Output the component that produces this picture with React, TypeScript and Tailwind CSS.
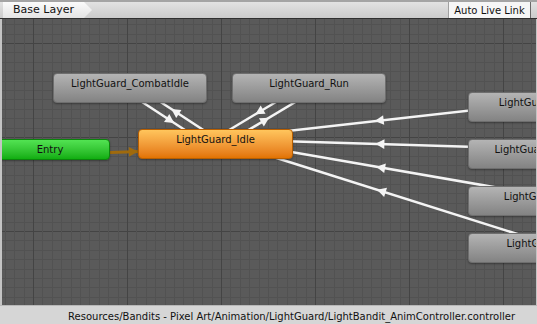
import React from "react";

type NodeKind = "gray" | "orange" | "green";

type StateNode = {
  id: string;
  label: string;
  x: number;
  y: number;
  w: number;
  h: number;
  kind: NodeKind;
};

// page coordinates (the canvas starts at 2,19)
const nodes: StateNode[] = [
  { id: "entry", label: "Entry", x: -10, y: 139, w: 120, h: 21, kind: "green" },
  { id: "idle", label: "LightGuard_Idle", x: 138, y: 129, w: 155, h: 30, kind: "orange" },
  { id: "combat", label: "LightGuard_CombatIdle", x: 53, y: 73, w: 154, h: 30, kind: "gray" },
  { id: "run", label: "LightGuard_Run", x: 232, y: 73, w: 154, h: 30, kind: "gray" },
  { id: "attack", label: "LightGuard_Attack", x: 468, y: 92, w: 154, h: 30, kind: "gray" },
  { id: "recover", label: "LightGuard_Recover", x: 468, y: 139, w: 154, h: 30, kind: "gray" },
  { id: "hurt", label: "LightGuard_Hurt", x: 468, y: 186, w: 154, h: 30, kind: "gray" },
  { id: "die", label: "LightGuard_Die", x: 468, y: 233, w: 154, h: 30, kind: "gray" },
];

const transitions: [string, string][] = [
  ["combat", "idle"],
  ["idle", "combat"],
  ["run", "idle"],
  ["idle", "run"],
  ["attack", "idle"],
  ["recover", "idle"],
  ["hurt", "idle"],
  ["die", "idle"],
];

const kindClass: Record<NodeKind, string> = {
  gray: "bg-linear-to-b from-[#b4b4b4] to-[#838383] border border-[#6e6e6e] pt-[4px]",
  orange: "bg-linear-to-b from-[#ffc55c] to-[#e27300] border border-[#b85e00] pt-[4px]",
  green: "bg-linear-to-b from-[#52e352] to-[#0fae0f] border border-[#0b850b] flex items-center justify-center",
};

const byId = (id: string) => nodes.find((n) => n.id === id)!;
const center = (n: StateNode) => ({ x: n.x + n.w / 2, y: n.y + n.h / 2 });

function Edge({ from, to, color, width }: { from: StateNode; to: StateNode; color: string; width: number }) {
  const a = center(from);
  const b = center(to);
  const len = Math.hypot(b.x - a.x, b.y - a.y);
  const dx = (b.x - a.x) / len;
  const dy = (b.y - a.y) / len;
  const ox = -dy * 5;
  const oy = dx * 5;
  const x1 = a.x + ox;
  const y1 = a.y + oy;
  const x2 = b.x + ox;
  const y2 = b.y + oy;
  const mx = (x1 + x2) / 2;
  const my = (y1 + y2) / 2;
  const tip = [mx + dx * 5, my + dy * 5];
  const bx = mx - dx * 4;
  const by = my - dy * 4;
  const p1 = [bx - dy * 4.8, by + dx * 4.8];
  const p2 = [bx + dy * 4.8, by - dx * 4.8];
  return (
    <g>
      <line x1={x1} y1={y1} x2={x2} y2={y2} stroke={color} strokeWidth={width} />
      <polygon points={`${tip.join(",")} ${p1.join(",")} ${p2.join(",")}`} fill={color} />
    </g>
  );
}

function Grid() {
  const vLines = [];
  for (let i = -4; i <= 54; i++) {
    const x = Math.round(33 + i * 9.4) + 0.5;
    const major = ((i % 10) + 10) % 10 === 0;
    vLines.push(
      <line key={"v" + i} x1={x} y1={0} x2={x} y2={330} stroke={major ? "#444444" : "#525252"} strokeWidth={1} />
    );
  }
  const hLines = [];
  for (let j = -5; j <= 30; j++) {
    const y = Math.round(43 + j * 9.4) + 0.5;
    const major = ((j % 10) + 10) % 10 === 0;
    hLines.push(
      <line key={"h" + j} x1={0} y1={y} x2={540} y2={y} stroke={major ? "#444444" : "#525252"} strokeWidth={1} />
    );
  }
  return (
    <g>
      {hLines}
      {vLines}
    </g>
  );
}

export default function App() {
  return (
    <div className="w-[537px] h-[324px] flex flex-col bg-[#c4c4c4] font-['DejaVu_Sans',sans-serif] text-[#111] overflow-hidden">
      {/* toolbar */}
      <div className="h-[19px] flex items-stretch border-t-2 border-[#a4a4a4] bg-linear-to-b from-[#e2e2e2] to-[#cbcbcb] border-b border-b-[#2f2f2f]">
        <div className="ml-[3px] w-[89px] pl-[10px] flex items-center text-[11px] bg-linear-to-b from-[#fbfbfb] to-[#e4e4e4] [clip-path:polygon(0_0,calc(100%-8px)_0,100%_50%,calc(100%-8px)_100%,0_100%)]">
          Base Layer
        </div>
        <div className="ml-auto mr-[6px] w-[83px] flex items-center justify-center text-[10px] bg-[#f6f6f6] border-l border-[#a0a0a0] border-r border-r-[#6a6a6a]">
          Auto Live Link
        </div>
      </div>

      {/* graph canvas */}
      <div className="flex-1 flex pl-[2px] pr-[1px]">
        <div className="relative flex-1 overflow-hidden bg-[#5a5a5a]">
          <svg className="absolute left-0 top-0" width={534} height={286} viewBox="2 19 534 286">
            <Grid />
            {transitions.map(([f, t]) => (
              <Edge key={f + t} from={byId(f)} to={byId(t)} color="#f4f4f4" width={2.5} />
            ))}
            <Edge from={byId("entry")} to={byId("idle")} color="#a06a0c" width={3} />
          </svg>
          {nodes.map((n) => (
            <div
              key={n.id}
              className={`absolute rounded-[4px] shadow-[0_1px_2px_rgba(0,0,0,0.35)] text-center text-[10px] leading-[12px] whitespace-nowrap ${kindClass[n.kind]}`}
              style={{ left: n.x - 2, top: n.y - 19, width: n.w, height: n.h }}
            >
              {n.label}
            </div>
          ))}
        </div>
      </div>

      {/* status bar */}
      <div className="h-[19px] flex items-center justify-end pr-[22px] pt-[2px] text-[10px] bg-[#d6d6d6] border-t border-[#b8b8b8]">
        Resources/Bandits - Pixel Art/Animation/LightGuard/LightBandit_AnimController.controller
      </div>
    </div>
  );
}
